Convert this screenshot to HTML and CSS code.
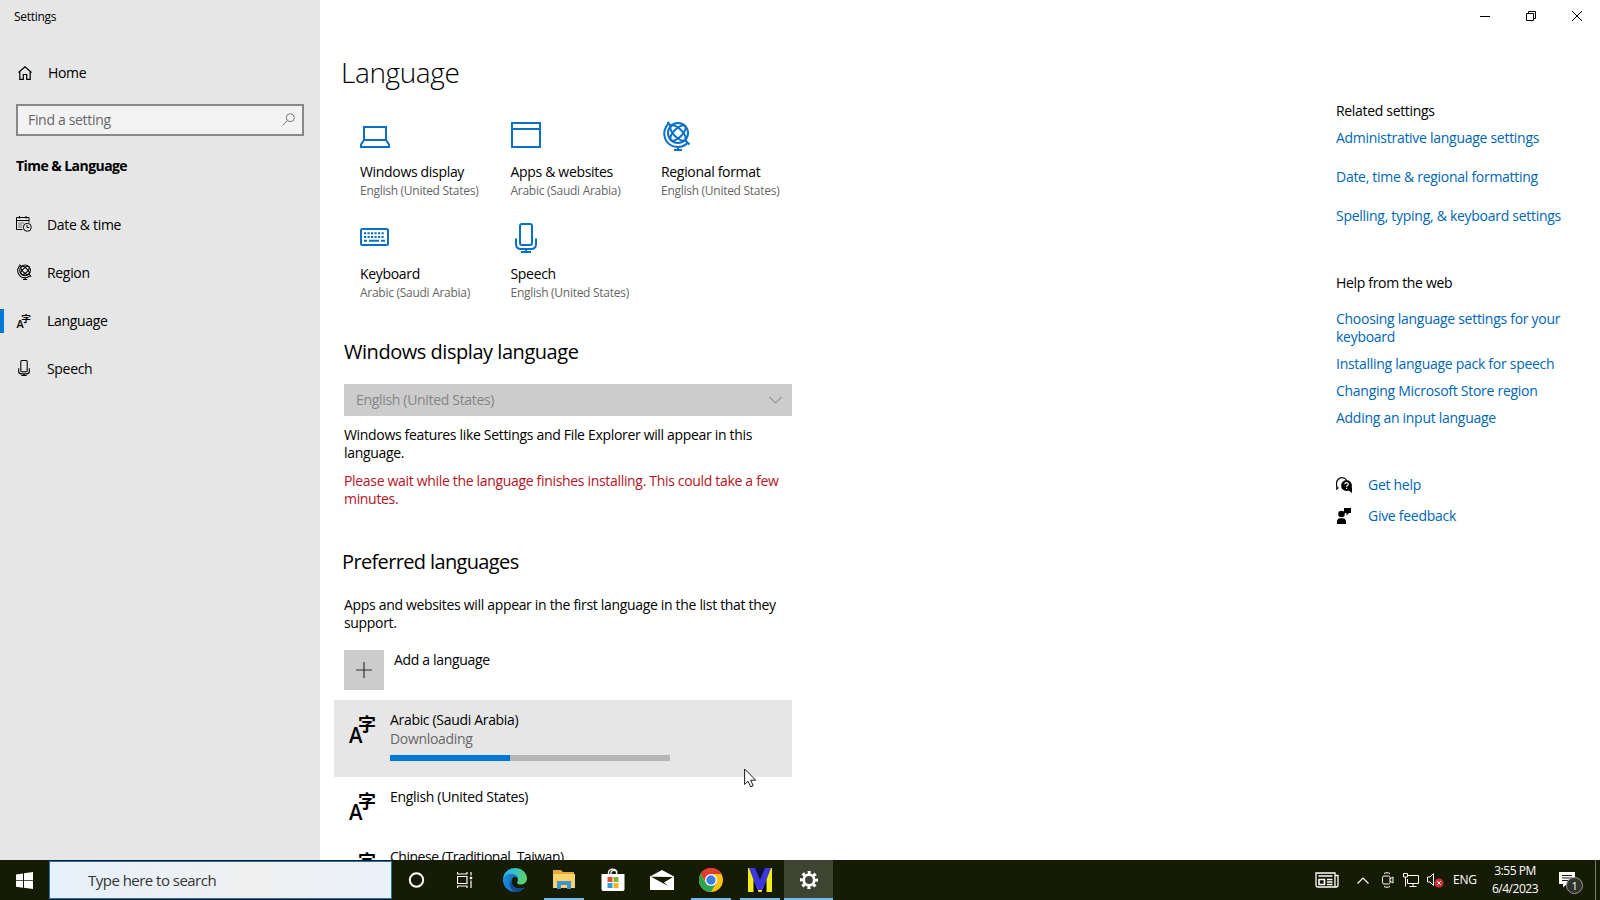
FILE: index.html
```
<!DOCTYPE html>
<html lang="en">
<head>
    <meta charset="UTF-8">
    <meta name="viewport" content="width=device-width, initial-scale=1.0">
    <title>Settings</title>
    <link rel="stylesheet" href="styles.css">
</head>
<body>
    <!-- Shared icons -->
    <svg class="sprite" width="0" height="0">
        <symbol id="icon-lang" viewBox="0 0 28 28">
            <text class="lang-a" x="0" y="27.500" textLength="13" lengthAdjust="spacingAndGlyphs">A</text>
            <text class="lang-zi" x="9" y="16">字</text>
        </symbol>
        <symbol id="icon-globe" viewBox="0 0 30 30">
            <g fill="none" stroke="currentColor" stroke-width="2">
                <circle cx="17" cy="12" r="10"/>
                <ellipse cx="17" cy="12" rx="4.300" ry="10" transform="rotate(-45 17 12)"/>
                <ellipse cx="17" cy="12" rx="4.300" ry="10" transform="rotate(45 17 12)"/>
                <path d="M6.500 1l3.500 4M7.500 2.500C-.500 11 3 25.500 17 26c4 0 7-1.500 9.500-4M24 19l4.500 4.500M17 26v3M13 29h8"/>
            </g>
        </symbol>
        <symbol id="icon-mic" viewBox="0 0 22 30">
            <g fill="none" stroke="currentColor" stroke-width="2">
                <rect x="5" y="1" width="12" height="21" rx="2"/>
                <path d="M1 15.500V21c0 3 2 5 5 5h10c3 0 5-2 5-5v-5.500M11 26v3M6 29h10"/>
            </g>
        </symbol>
    </svg>

    <div class="window">
        <div class="sidebar">
            <div class="app-title">Settings</div>
            <div class="nav-home">
                <svg class="icon" width="14" height="14" viewBox="0 0 14 14" fill="none" stroke="#000" stroke-width="1.200"><path d="M.5 6.500L7 .8l6.500 5.700M1.800 5.500v7.900h3.500V8.500h3.400v4.900h3.500V5.500"/></svg>
                <span>Home</span>
            </div>
            <div class="search-box">
                <span>Find a setting</span>
                <svg width="13" height="13" viewBox="0 0 13 13" fill="none" stroke="#777" stroke-width="1"><circle cx="8.300" cy="4.700" r="4"/><path d="M5.500 7.500L.5 12.500"/></svg>
            </div>
            <div class="nav-section">Time &amp; Language</div>
            <div class="nav-item">
                <svg class="icon" width="16" height="16" viewBox="0 0 16 16" fill="none" stroke="#000"><path d="M6.500 13.500h-6v-12h12.500v5M.5 4.500H13M3.500 0v2.500M10 0v2.500"/><path d="M2.500 7h6M2.500 9h4M2.500 11h4" stroke-dasharray="1 1"/><circle cx="11.300" cy="11.300" r="4"/><path d="M11 9v2.500h2.200"/></svg>
                <span>Date &amp; time</span>
            </div>
            <div class="nav-item">
                <svg class="icon" width="16" height="16"><use href="#icon-globe"/></svg>
                <span>Region</span>
            </div>
            <div class="nav-item active">
                <svg class="icon" width="16" height="15"><use href="#icon-lang"/></svg>
                <span>Language</span>
            </div>
            <div class="nav-item">
                <svg class="icon" width="14" height="16"><use href="#icon-mic"/></svg>
                <span>Speech</span>
            </div>
        </div>

        <div class="content">
            <h1>Language</h1>

            <div class="tiles">
                <div class="tile">
                    <svg width="30" height="30" viewBox="0 0 30 30" fill="none" stroke="currentColor" stroke-width="2"><path d="M4 19V6h22v13M4 19h22l3 4.500V26H1v-2.500z"/></svg>
                    <div class="tile-name">Windows display</div>
                    <div class="tile-value">English (United States)</div>
                </div>
                <div class="tile">
                    <svg width="30" height="30" viewBox="0 0 30 30" fill="none" stroke="currentColor" stroke-width="2"><path d="M1 2h28v24H1zM1 8h28"/></svg>
                    <div class="tile-name">Apps &amp; websites</div>
                    <div class="tile-value">Arabic (Saudi Arabia)</div>
                </div>
                <div class="tile">
                    <svg width="30" height="30"><use href="#icon-globe"/></svg>
                    <div class="tile-name">Regional format</div>
                    <div class="tile-value">English (United States)</div>
                </div>
                <div class="tile">
                    <svg width="30" height="30" viewBox="0 0 30 30" fill="none" stroke="currentColor" stroke-width="2"><rect x="1" y="6" width="27" height="16" rx="1.500"/><path d="M4 10.200h21M4 14h21" stroke-dasharray="2.200 1.300"/><path d="M4 17.800h3M9 17.800h10M21 17.800h4"/></svg>
                    <div class="tile-name">Keyboard</div>
                    <div class="tile-value">Arabic (Saudi Arabia)</div>
                </div>
                <div class="tile">
                    <svg class="tile-mic" width="22" height="30"><use href="#icon-mic"/></svg>
                    <div class="tile-name">Speech</div>
                    <div class="tile-value">English (United States)</div>
                </div>
            </div>

            <h2>Windows display language</h2>
            <div class="dropdown">
                <span>English (United States)</span>
                <svg width="13" height="8" viewBox="0 0 13 8" fill="none" stroke="#999" stroke-width="1.200"><path d="M.5 1l6 6 6-6"/></svg>
            </div>
            <p class="note">Windows features like Settings and File Explorer will appear in this<br>language.</p>
            <p class="note warning">Please wait while the language finishes installing. This could take a few<br>minutes.</p>

            <h2 class="preferred">Preferred languages</h2>
            <p class="note">Apps and websites will appear in the first language in the list that they<br>support.</p>

            <div class="add-language">
                <div class="add-button"><svg width="16" height="16" viewBox="0 0 16 16" stroke="#333" stroke-width="1.200"><path d="M8 0v16M0 8h16"/></svg></div>
                <span>Add a language</span>
            </div>

            <div class="language selected">
                <svg class="lang-icon" width="28" height="28"><use href="#icon-lang"/></svg>
                <div>
                    <div class="lang-name">Arabic (Saudi Arabia)</div>
                    <div class="lang-status">Downloading</div>
                    <div class="progress"><div class="progress-fill" style="width: 43%"></div></div>
                </div>
            </div>
            <div class="language">
                <svg class="lang-icon" width="28" height="28"><use href="#icon-lang"/></svg>
                <div class="lang-name">English (United States)</div>
            </div>
            <div class="language">
                <svg class="lang-icon" width="28" height="28"><use href="#icon-lang"/></svg>
                <div class="lang-name long">Chinese (Traditional, Taiwan)</div>
            </div>
        </div>

        <div class="aside">
            <div class="window-buttons">
                <svg width="10" height="10" viewBox="0 0 10 10" stroke="#000"><path d="M0 5.500h10"/></svg>
                <svg width="10" height="10" viewBox="0 0 10 10" fill="none" stroke="#000"><path d="M.5 2.500h7v7h-7zM2.500 2.500v-2h7v7h-2"/></svg>
                <svg width="10" height="10" viewBox="0 0 10 10" stroke="#000"><path d="M0 0l10 10M10 0L0 10"/></svg>
            </div>
            <div class="aside-title">Related settings</div>
            <a class="related">Administrative language settings</a>
            <a class="related">Date, time &amp; regional formatting</a>
            <a class="related">Spelling, typing, &amp; keyboard settings</a>
            <div class="aside-title help">Help from the web</div>
            <a>Choosing language settings for your<br>keyboard</a>
            <a>Installing language pack for speech</a>
            <a>Changing Microsoft Store region</a>
            <a>Adding an input language</a>
            <div class="support-links">
                <div class="support">
                    <svg width="16" height="16" viewBox="0 0 16 16"><path d="M2.500 10.500L.8 12V9.500C-.5 5 2 .7 6 .7c2 0 3.500.8 4.500 2.300" fill="none" stroke="#000" stroke-width="1.200"/><circle cx="10.500" cy="8.500" r="5.400"/><path d="M12 13l4 3v-6z"/><path d="M8.800 7.300c0-2.300 3.500-2.300 3.500 0 0 1.300-1.700 1.300-1.700 2.500M10.600 10.800v1.200" fill="none" stroke="#fff" stroke-width="1.200"/></svg>
                    <a>Get help</a>
                </div>
                <div class="support">
                    <svg width="16" height="16" viewBox="0 0 16 16"><path d="M8 0h7v5h-2l-2.500 2.500V5H8z"/><circle cx="5.500" cy="6" r="3.300"/><path d="M1 16v-2.500c0-2 1.300-3.300 3-3.300h3c1.700 0 3 1.300 3 3.300V16z"/></svg>
                    <a>Give feedback</a>
                </div>
            </div>
        </div>
    </div>

    <div class="taskbar">
        <div class="start"><svg width="17" height="17" viewBox="0 0 17 17" fill="#fff"><path d="M0 2.500l7-1v6.700H0zM8 1.300l9-1.300v8.200H8zM0 9h7v6.700l-7-1zM8 9h9v8l-9-1.300z"/></svg></div>
        <div class="taskbar-search"><span>Type here to search</span></div>
        <div class="apps">
            <div class="app"><svg width="18" height="18" viewBox="0 0 18 18" fill="none" stroke="#fff" stroke-width="2"><circle cx="8.500" cy="9" r="6.700"/></svg></div>
            <div class="app"><svg width="18" height="18" viewBox="0 0 18 18" fill="none" stroke="#fff" stroke-width="1.200"><path d="M.5 5.500H10v7H.5zM.5 1v2H10V1M.5 17v-2H10v2M14 1v3.500M14 9.500V17"/><path d="M12.800 7h2.400" stroke-width="2.400"/></svg></div>
            <div class="app">
                <svg width="24" height="24" viewBox="0 0 24 24">
                    <defs>
                        <linearGradient id="edge-top" x1="0" x2="1" y1=".3" y2=".5"><stop offset="0" stop-color="#2fb0ea"/><stop offset=".5" stop-color="#35c1c8"/><stop offset="1" stop-color="#62d35a"/></linearGradient>
                        <linearGradient id="edge-low" x1="0" x2="1"><stop offset="0" stop-color="#1a8fdd"/><stop offset="1" stop-color="#0c4f9c"/></linearGradient>
                    </defs>
                    <path d="M0 12C0 5 5.500 0 12 0s12 4.800 12 10.500c0 3.500-2.800 6-6 6-2.500 0-4-.8-4-1.800 0-.7 1-1.200 1-3 0-2.500-2.500-4.500-6-4.500-5 0-8.500 3-9 4.800z" fill="url(#edge-top)"/>
                    <path d="M0 12c.8-4 4-6 8-6 3.500 0 6 1.500 6.800 4-1-.8-2-1-3-1-2 0-3.300 2-3.300 4.500 0 4.500 3.800 7 8 7 2.500 0 4.500-1 5.500-1.500C19.700 22 16 24 12 24 5.400 24 0 18.600 0 12z" fill="url(#edge-low)"/>
                    <path d="M8.500 13.500c0 4.500 3.800 7 8 7 2.500 0 4.500-1 5.500-1.500-2.200 3-5.500 5-9 5-4-1-7-5-6-10z" fill="#124c91"/>
                </svg>
            </div>
            <div class="app running"><svg width="22" height="20" viewBox="0 0 22 20"><path d="M0 0h8l2 2h11v6H0z" fill="#e5a93c"/><path d="M0 4h22v14H0z" fill="#fcd36a"/><path d="M4 19v-8h14v8h-4v-4H8v4z" fill="#3f93d4"/></svg></div>
            <div class="app"><svg width="24" height="24" viewBox="0 0 24 24"><path d="M7.500 6.500V4.500c0-4.500 8-4.500 8 0v2M10 6.500V4.500c0-3 6-3 6 0" fill="none" stroke="#fff" stroke-width="1.300"/><path d="M.5 6h23v15c0 1.500-1 2-2 2h-19c-1 0-2-.5-2-2z" fill="#fff"/><path d="M6.500 9h5v5h-5z" fill="#e5502b"/><path d="M12.500 9h5v5h-5z" fill="#7cb82f"/><path d="M6.500 15h5v5h-5z" fill="#2a9fe0"/><path d="M12.500 15h5v5h-5z" fill="#f6b51e"/></svg></div>
            <div class="app"><svg width="24" height="20" viewBox="0 0 24 20"><path d="M0 6.500L12 0l12 6.500V20H0z" fill="#fff"/><path d="M1 6.800l22 .2-9 5.500 4 3.500z" fill="#161b04"/></svg></div>
            <div class="app running"><svg width="24" height="24" viewBox="0 0 24 24"><circle cx="12" cy="12" r="12" fill="#fbc116"/><path d="M1.600 6A12 12 0 0 1 22.400 6H12L7 15z" fill="#e33b2e"/><path d="M1.600 6A12 12 0 0 0 12 24l5.200-9H6.800z" fill="#2da44e"/><circle cx="12" cy="12" r="6" fill="#fff"/><circle cx="12" cy="12" r="4.700" fill="#3c7de6"/></svg></div>
            <div class="app running"><svg width="24" height="24" viewBox="0 0 24 24"><path d="M0 0h24v24H0z" fill="#f2ec1c"/><path d="M6 0h12v12H6z" fill="#10113a"/><path d="M5.500 24V11l5 13zM18.500 24V11l-5 13z" fill="#05061c"/><path d="M1 0h6l5 12 5-12h6l-8.500 22h-5z" fill="#3838dc"/></svg></div>
            <div class="app current"><svg width="20" height="20" viewBox="0 0 20 20" fill="none" stroke="#fff"><circle cx="10" cy="10" r="5.300" stroke-width="2.800"/><circle cx="10" cy="10" r="7.600" stroke-width="3" stroke-dasharray="3 2.969" stroke-dashoffset="1.500"/></svg></div>
        </div>
        <div class="tray">
            <svg class="news" width="24" height="16" viewBox="0 0 24 16" fill="none" stroke="#fff" stroke-width="1.300"><path d="M1 1h19v14H3c-1.300 0-2-.8-2-2zM20 3.500h3V13c0 1.300-.8 2-2 2h-2M3.500 4h14M12 7.500h5.500M12 10h5.500M12 12.500h5.500"/><path d="M4 7.500h5.500v5H4z" stroke-width="1.600"/></svg>
            <svg class="chevron" width="12" height="7" viewBox="0 0 12 7" fill="none" stroke="#fff" stroke-width="1.200"><path d="M.5 6.500L6 1l5.500 5.500"/></svg>
            <svg class="camera" width="12" height="16" viewBox="0 0 12 16" fill="none" stroke="#fff"><rect x=".5" y="4" width="7.500" height="8" rx="1.500"/><path d="M8 7l3-2v6L8 9M2 1.500c2-1 4-1 6 0M2 14.500c2 1 4 1 6 0"/></svg>
            <svg class="network" width="16" height="14" viewBox="0 0 16 14" fill="none" stroke="#fff"><path d="M4.500 2.500h11v8h-11V6M10 10.500v3M6.500 13.500h7M.5 1v3h4V.5h-4v1M2.500 4v9.500"/></svg>
            <svg class="volume" width="17" height="16" viewBox="0 0 17 16" fill="none" stroke="#fff"><path d="M.5 5h2.500l3.500-3.500v12L3 10H.5z"/><circle cx="12" cy="11" r="4.500" fill="#d22b3a" stroke="none"/><path d="M10.200 9.200l3.600 3.600M13.800 9.200l-3.600 3.600"/></svg>
            <span class="keyboard-lang">ENG</span>
            <div class="clock"><div>3:55 PM</div><div>6/4/2023</div></div>
            <div class="notifications">
                <svg width="16" height="16" viewBox="0 0 16 16"><path d="M0 0h16v12h-8l-4 3.500V12H0z" fill="#fff"/><path d="M3 3.500h10M3 6h10M3 8.500h7" stroke="#161b04"/></svg>
                <span class="count">1</span>
            </div>
            <div class="show-desktop"></div>
        </div>
    </div>

    <svg class="cursor" width="13" height="20" viewBox="0 0 13 20"><path d="M.6 1v15.500l3.500-3.300 2.500 5.600 2.600-1.100-2.500-5.500h5z" fill="#fff" stroke="#000" stroke-width=".9"/></svg>
</body>
</html>
```
FILE: styles.css
```
* {
    box-sizing: border-box;
    letter-spacing: -0.023em;
}

body {
    margin: 0;
    width: 1600px;
    height: 900px;
    display: flex;
    flex-direction: column;
    overflow: hidden;
    background: #fff;
    color: #000;
    font-family: 'Open Sans', 'Noto Sans', sans-serif;
    font-size: 14px;
    line-height: 18px;
    white-space: nowrap;
}

svg {
    display: block;
    flex: none;
}

h1, h2, p {
    margin: 0;
    font-weight: 400;
}

.sprite {
    display: none;
}

.lang-a {
    font: 600 21px 'Open Sans', sans-serif;
}

.lang-zi {
    font: 700 18px 'Noto Sans CJK SC', sans-serif;
}

.window {
    display: flex;
    height: 860px;
    overflow: hidden;
}

/* Sidebar */
.sidebar {
    width: 320px;
    background: #e6e6e6;
}

.app-title {
    padding: 8px 14px 0;
    font-size: 12px;
}

.nav-home {
    display: flex;
    align-items: center;
    height: 48px;
    margin-top: 23px;
    padding-left: 18px;
    gap: 16px;
}

.search-box {
    display: flex;
    align-items: center;
    justify-content: space-between;
    width: 288px;
    height: 32px;
    margin: 7px 0 0 16px;
    padding: 0 7px 1px 10px;
    border: 2px solid #888;
    background: #f3f3f3;
    color: #666;
}

.nav-section {
    margin: 21px 0 26px;
    padding: 0 16px;
    font-weight: 700;
    letter-spacing: -0.04em;
}

.nav-item {
    display: flex;
    align-items: center;
    height: 48px;
    padding-left: 17px;
}

.nav-item .icon {
    width: 16px;
    margin: 0 15px 2px -1px;
}

.nav-item.active {
    background: linear-gradient(#0078d7, #0078d7) 0 50% / 4px 24px no-repeat;
}

/* Main column */
.content {
    width: 880px;
    padding: 50px 0 0 24px;
}

h1 {
    font-size: 28px;
    font-weight: 300;
    line-height: 44px;
    margin-left: -3px;
    letter-spacing: -0.014em;
}

.tiles {
    display: grid;
    grid-template-columns: repeat(3, 150.5px);
    grid-auto-rows: 102px;
    margin: 27px 0 0 16px;
}

.tile svg {
    color: #0a6fc6;
}

.tile-name {
    margin-top: 12px;
}

.tile-value {
    margin-top: 1px;
    font-size: 12px;
    color: #666;
}

.tile svg.tile-mic {
    margin-left: 4px;
}

h2 {
    font-size: 20px;
    line-height: 28px;
    margin-top: 13px;
}

.dropdown {
    display: flex;
    align-items: center;
    justify-content: space-between;
    width: 448px;
    height: 32px;
    margin: 18px 0 10px;
    padding: 0 10px 0 12px;
    background: #ccc;
    color: #858585;
}

.note {
    margin-bottom: 10px;
}

.warning {
    color: #b5121f;
}

h2.preferred {
    margin: 40px 0 20px -2px;
    letter-spacing: -0.032em;
}

.add-language {
    display: flex;
    margin-top: 18px;
    gap: 10px;
}

.add-language span {
    margin-top: 1px;
}

.add-button {
    display: flex;
    align-items: center;
    justify-content: center;
    width: 40px;
    height: 40px;
    background: #ccc;
}

.language {
    display: flex;
    width: 458px;
    height: 60px;
    margin-left: -10px;
    padding: 11px 0 0 15px;
    gap: 13px;
}

.language.selected {
    height: 77px;
    margin-top: 10px;
    background: #e6e6e6;
}

.lang-icon {
    margin-top: 4px;
}

.lang-name.long {
    letter-spacing: -0.034em;
}

.lang-status {
    margin-top: 1px;
    color: #666;
}

.progress {
    width: 280px;
    height: 6px;
    margin-top: 7px;
    background: #b6b6b6;
}

.progress-fill {
    height: 6px;
    background: #0078d7;
}

/* Related links */
.aside {
    width: 400px;
    padding-left: 136px;
}

.window-buttons {
    display: flex;
    justify-content: flex-end;
    height: 102px;
    padding: 11px 18px 0 0;
    gap: 36px;
}

.aside a {
    display: block;
    margin-bottom: 9px;
    color: #0066b4;
    letter-spacing: -0.02em;
}

.aside-title {
    margin-bottom: 9px;
}

.aside a.related {
    margin-bottom: 21px;
}

.aside-title.help {
    margin: 49px 0 18px;
}

.support-links {
    margin-top: 42px;
}

.support {
    display: flex;
    align-items: center;
    height: 31px;
    gap: 16px;
}

.aside .support a {
    margin: 0;
}

/* Taskbar */
.taskbar {
    display: flex;
    height: 40px;
    background: #161b04;
    color: #fff;
}

.start {
    display: flex;
    align-items: center;
    width: 49px;
    padding-left: 16px;
}

.taskbar-search {
    width: 343px;
    height: 38px;
    margin-top: 1px;
    padding-left: 38px;
    border: 1px solid #1b72b8;
    background: linear-gradient(90deg, #e5f1fb, #f0f0f0 60%, #e9f1f9);
    color: #333;
    font-size: 15px;
    line-height: 36px;
}

.taskbar-search span {
    letter-spacing: -0.035em;
}

.apps {
    display: flex;
}

.app {
    display: flex;
    align-items: center;
    justify-content: center;
    width: 49px;
}

.running {
    background: linear-gradient(#76b9ed, #76b9ed) 50% 100% / 40px 2px no-repeat;
}

.current {
    border-bottom: 2px solid #76b9ed;
    background: #3f4332;
}

.current svg {
    margin-top: 2px;
}

.tray {
    display: flex;
    align-items: center;
    margin-left: auto;
    font-size: 12px;
}

.chevron {
    margin-left: 18px;
}

.camera {
    margin-left: 13px;
}

.network {
    margin-left: 9px;
}

.volume {
    margin-left: 8px;
}

.keyboard-lang {
    width: 24px;
    margin-left: 9px;
}

.clock {
    width: 60px;
    margin-left: 8px;
    text-align: center;
}

.clock div {
    letter-spacing: -0.04em;
}

.notifications {
    position: relative;
    margin: 0 20px 0 14px;
}

.count {
    position: absolute;
    top: 5px;
    left: 7px;
    width: 17px;
    height: 17px;
    border: 1px solid #999;
    border-radius: 50%;
    background: #30332a;
    font-size: 11px;
    line-height: 15px;
    text-align: center;
}

.show-desktop {
    width: 5px;
    height: 40px;
    border-left: 1px solid #777;
}

.cursor {
    position: absolute;
    top: 768px;
    left: 744px;
}
```
